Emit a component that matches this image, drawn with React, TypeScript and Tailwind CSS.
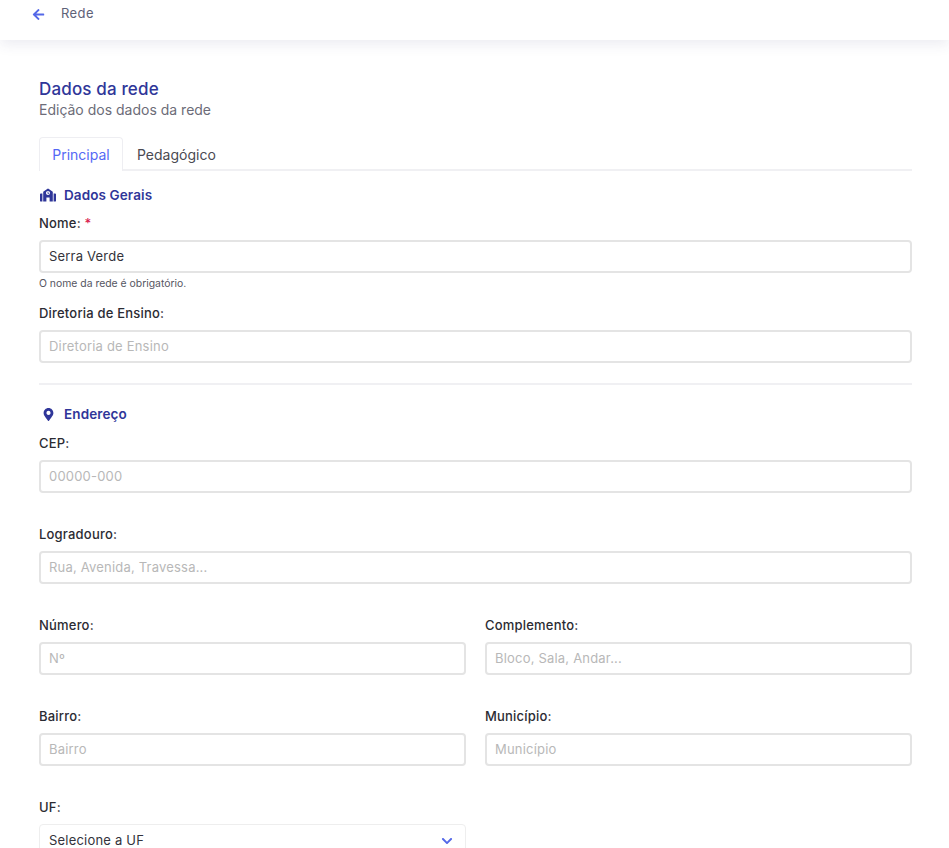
import { FaArrowLeft, FaChevronDown, FaMapMarkerAlt, FaSchool } from "react-icons/fa";

function Field({ label, placeholder, value, required }: { label: string; placeholder?: string; value?: string; required?: boolean }) {
	return (
		<div className="flex flex-col min-w-0">
			<label className="h-[17px] leading-[17px] text-[13px] tracking-[0.2px] font-medium text-[#2b2b33] mb-[8px]">
				{label}
				{required && <span className="text-[#d9214e]"> *</span>}
			</label>
			<div
				className={
					"h-[33px] border-2 border-[#e4e4e4] rounded-[4px] px-[8px] flex items-center text-[13px] tracking-[0.2px] bg-white " +
					(value ? "text-[#33333b]" : "text-[#b8b8b8]")
				}
			>
				{value ?? placeholder}
			</div>
		</div>
	);
}

function SectionTitle({ icon, children }: { icon: React.ReactNode; children: React.ReactNode }) {
	return (
		<div className="flex items-center h-[20px] text-[#2f3699] text-[13.5px] tracking-[0.1px] font-semibold">
			<span className="w-[25px] flex justify-center pr-[7px]">{icon}</span>
			{children}
		</div>
	);
}

export default function App() {
	return (
		<div className="h-[848px] overflow-hidden bg-white font-['Inter','Liberation_Sans',sans-serif]">
			<div className="h-[40px] bg-white shadow-[0_4px_14px_rgba(60,60,120,0.1)] flex items-start pl-[32px] pt-[5px]">
				<FaArrowLeft className="text-[#5468e8] text-[13px] mt-[3px]" />
				<span className="ml-[16px] text-[13px] tracking-[0.4px] leading-[16px] text-[#5e6278]">Rede</span>
			</div>

			<div className="pl-[39px] pr-[37px] pt-[39px]">
				<h1 className="text-[17px] tracking-[0.15px] leading-[20px] font-medium text-[#2f3699]">Dados da rede</h1>
				<p className="text-[14px] leading-[20px] text-[#6c6c78] mt-[1px]">Edição dos dados da rede</p>

				<div className="flex mt-[17px] border-b-2 border-[#f0f0f3] h-[34px]">
					<div className="w-[84px] h-[34px] border border-b-0 border-[#eeeef2] rounded-t-[4px] bg-white flex items-center justify-center text-[14px] text-[#5468f5]">
						Principal
					</div>
					<div className="ml-[14px] h-[34px] pt-[1px] flex items-center text-[14px] text-[#4a4a52]">Pedagógico</div>
				</div>

				<div className="mt-[14px]">
					<SectionTitle icon={<FaSchool className="text-[16px]" />}>Dados Gerais</SectionTitle>
				</div>

				<div className="mt-[10px]">
					<Field label="Nome:" value="Serra Verde" required />
					<p className="text-[10.4px] leading-[12px] text-[#55555f] mt-[5px]">O nome da rede é obrigatório.</p>
				</div>

				<div className="mt-[15px]">
					<Field label="Diretoria de Ensino:" placeholder="Diretoria de Ensino" />
				</div>

				<hr className="mt-[20px] border-0 h-[2px] bg-[#f0f0f3]" />

				<div className="mt-[19px]">
					<SectionTitle icon={<FaMapMarkerAlt className="text-[13px]" />}>Endereço</SectionTitle>
				</div>

				<div className="mt-[11px] flex flex-col gap-[33px]">
					<Field label="CEP:" placeholder="00000-000" />
					<Field label="Logradouro:" placeholder="Rua, Avenida, Travessa..." />
					<div className="grid grid-cols-2 gap-[19px]">
						<Field label="Número:" placeholder="Nº" />
						<Field label="Complemento:" placeholder="Bloco, Sala, Andar..." />
					</div>
					<div className="grid grid-cols-2 gap-[19px]">
						<Field label="Bairro:" placeholder="Bairro" />
						<Field label="Município:" placeholder="Município" />
					</div>
					<div className="grid grid-cols-2 gap-[19px]">
						<div className="flex flex-col">
							<label className="h-[17px] leading-[17px] text-[13px] tracking-[0.2px] font-medium text-[#2b2b33] mb-[8px]">UF:</label>
							<div className="h-[33px] border border-[#eeeeee] rounded-[4px] pl-[9px] pr-[12px] flex items-center justify-between text-[13px] tracking-[0.2px] text-[#33333b]">
								Selecione a UF
								<FaChevronDown className="text-[#5468e8] text-[12px]" />
							</div>
						</div>
					</div>
				</div>
			</div>
		</div>
	);
}
